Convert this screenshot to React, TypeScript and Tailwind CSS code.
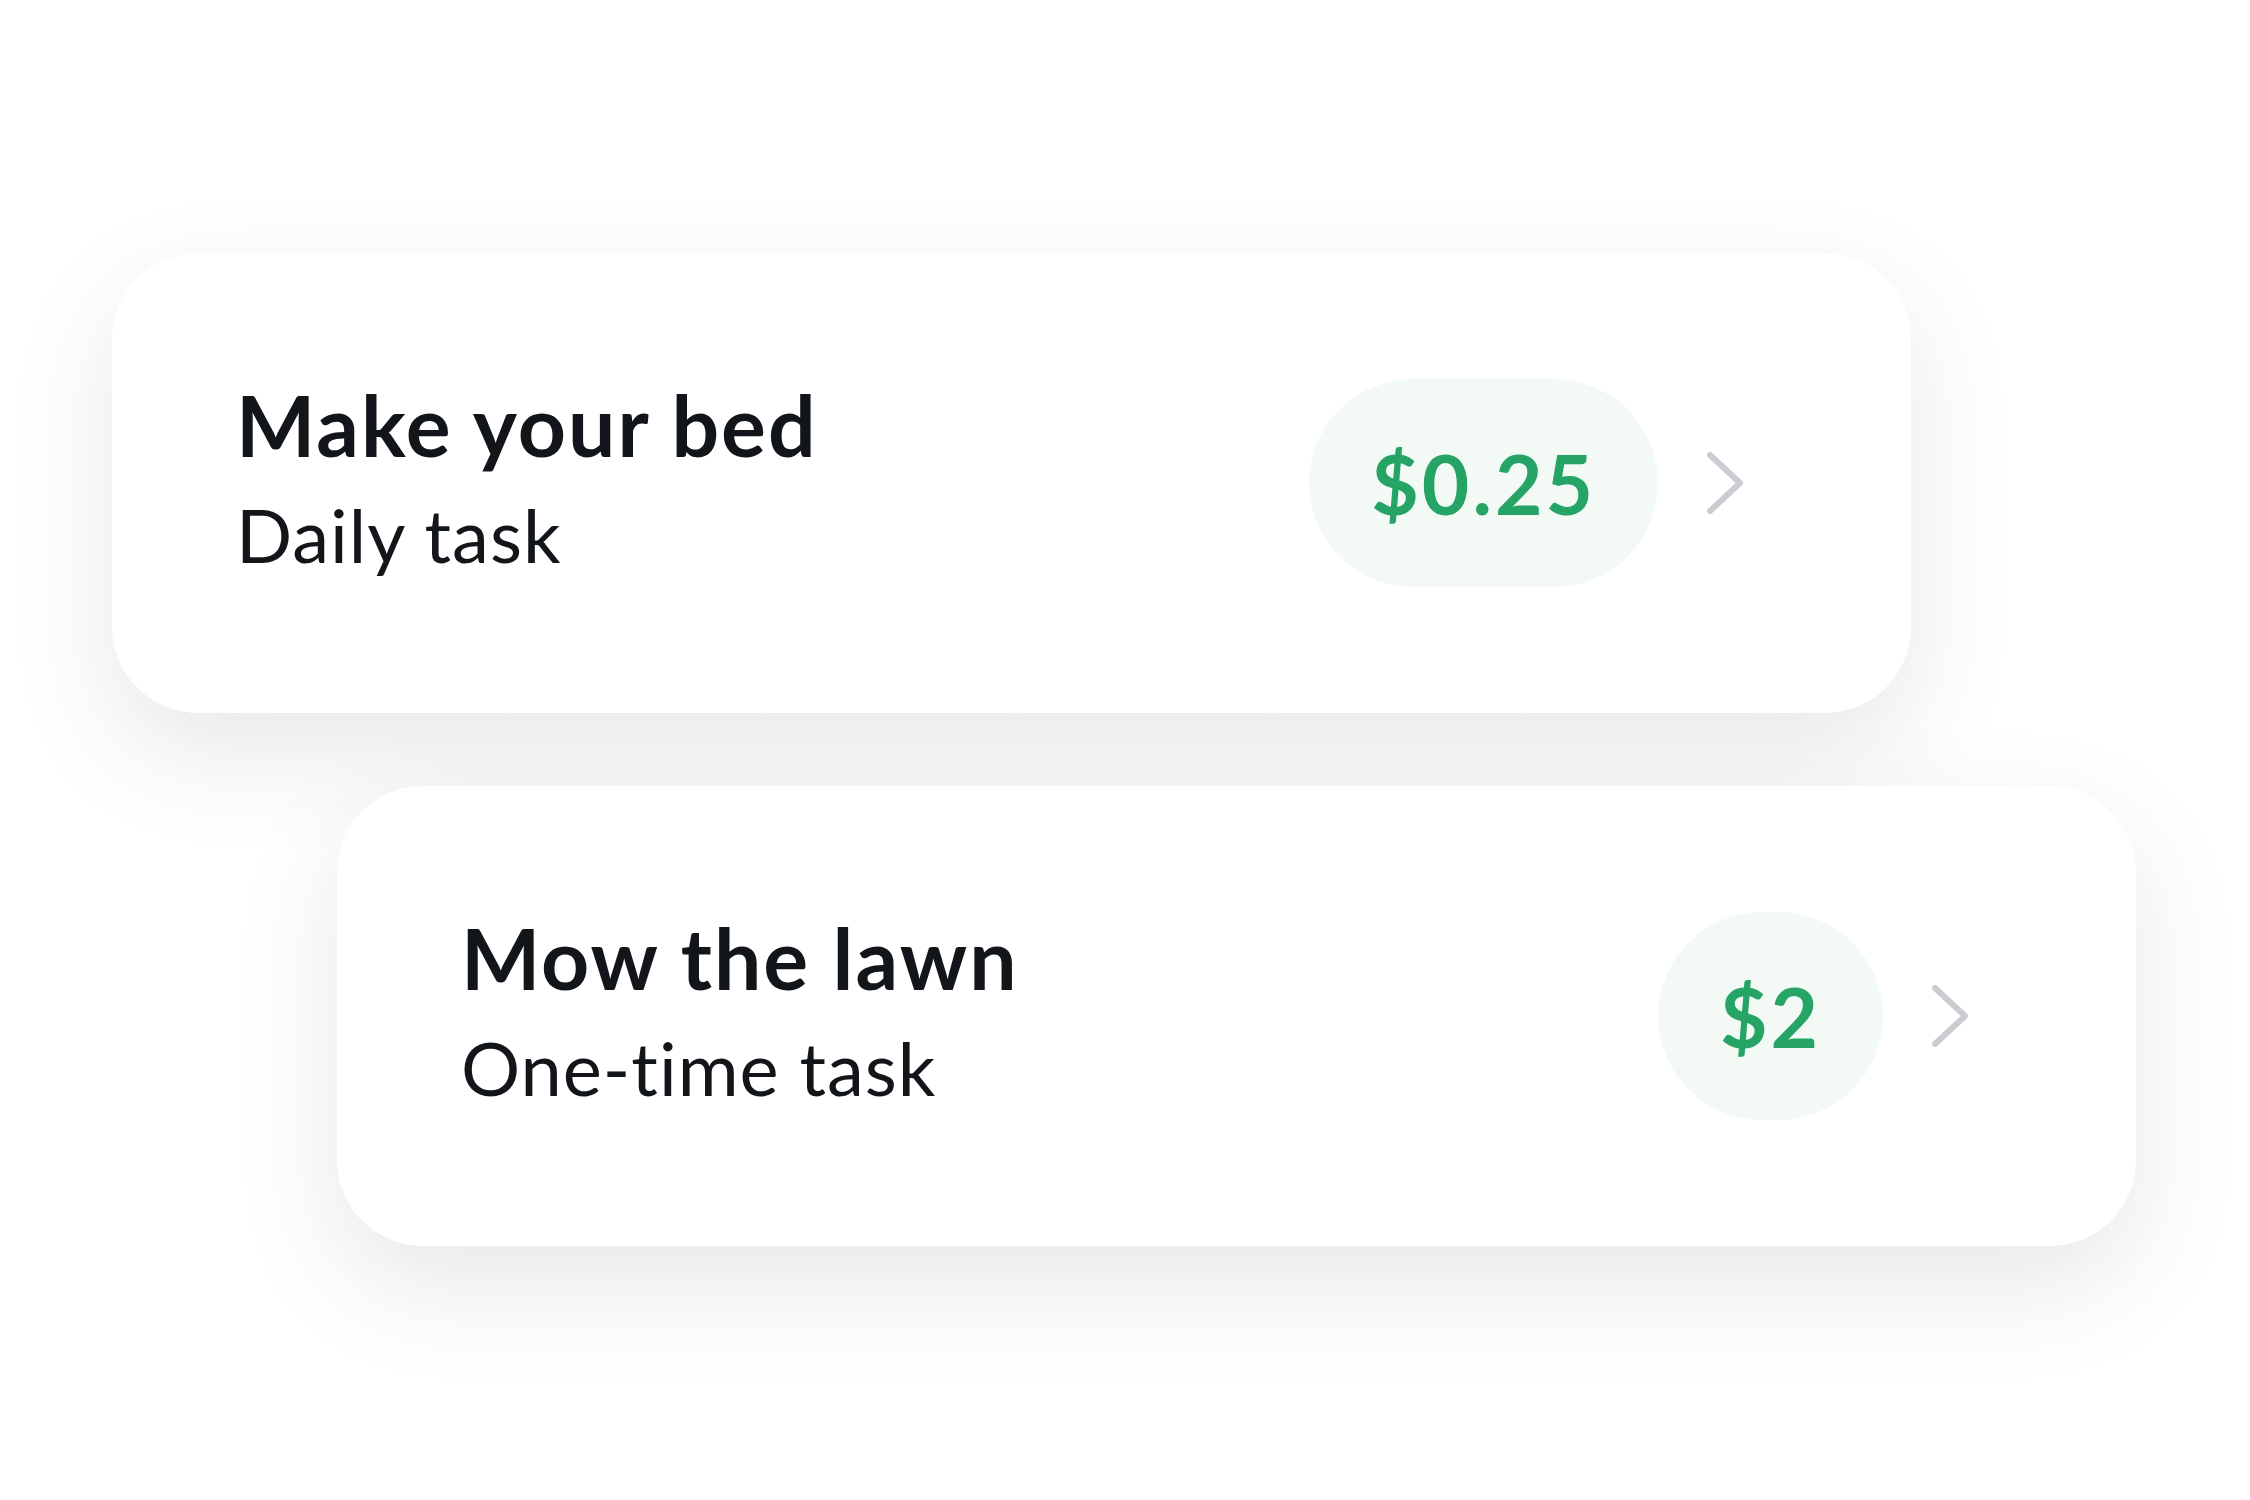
import React from "react";

type Chore = {
  title: string;
  cadence: string;
  reward: string;
};

const CHORES: Chore[] = [
  { title: "Make your bed", cadence: "Daily task", reward: "$0.25" },
  { title: "Mow the lawn", cadence: "One-time task", reward: "$2" },
];

function Chevron() {
  return (
    <svg width="36" height="62" viewBox="0 0 36 62" fill="none" className="shrink-0">
      <path d="M3 3 L33 31 L3 59" stroke="#c9ccd1" strokeWidth="6" strokeLinecap="round" strokeLinejoin="round" />
    </svg>
  );
}

function ChoreCard({ chore, className = "" }: { chore: Chore; className?: string }) {
  return (
    <div
      className={`w-[1799px] h-[460px] bg-white rounded-[86px] shadow-[0_40px_110px_rgba(30,41,59,0.11)] flex items-center justify-between pl-[124px] pr-[168px] ${className}`}
    >
      <div className="flex flex-col text-[#121519]">
        <p className="text-[84px] leading-[100px] font-bold tracking-[2px]">{chore.title}</p>
        <p className="text-[74px] leading-[113px] mt-[3px] font-normal tracking-[1px]">{chore.cadence}</p>
      </div>
      <div className="flex items-center gap-[49px]">
        <div className="h-[208px] px-[62px] rounded-full bg-[#f3faf5] flex items-center">
          <span className="text-[82px] leading-none font-bold tracking-[3px] text-[#25a466]">{chore.reward}</span>
        </div>
        <Chevron />
      </div>
    </div>
  );
}

export default function App() {
  return (
    <div
      className="w-[2250px] h-[1500px] overflow-hidden bg-white pt-[253px] pl-[112px]"
      style={{ fontFamily: "Lato, 'Noto Sans', sans-serif" }}
    >
      <div className="flex flex-col items-start">
        <ChoreCard chore={CHORES[0]} />
        <ChoreCard chore={CHORES[1]} className="ml-[225px] mt-[73px] relative" />
      </div>
    </div>
  );
}
